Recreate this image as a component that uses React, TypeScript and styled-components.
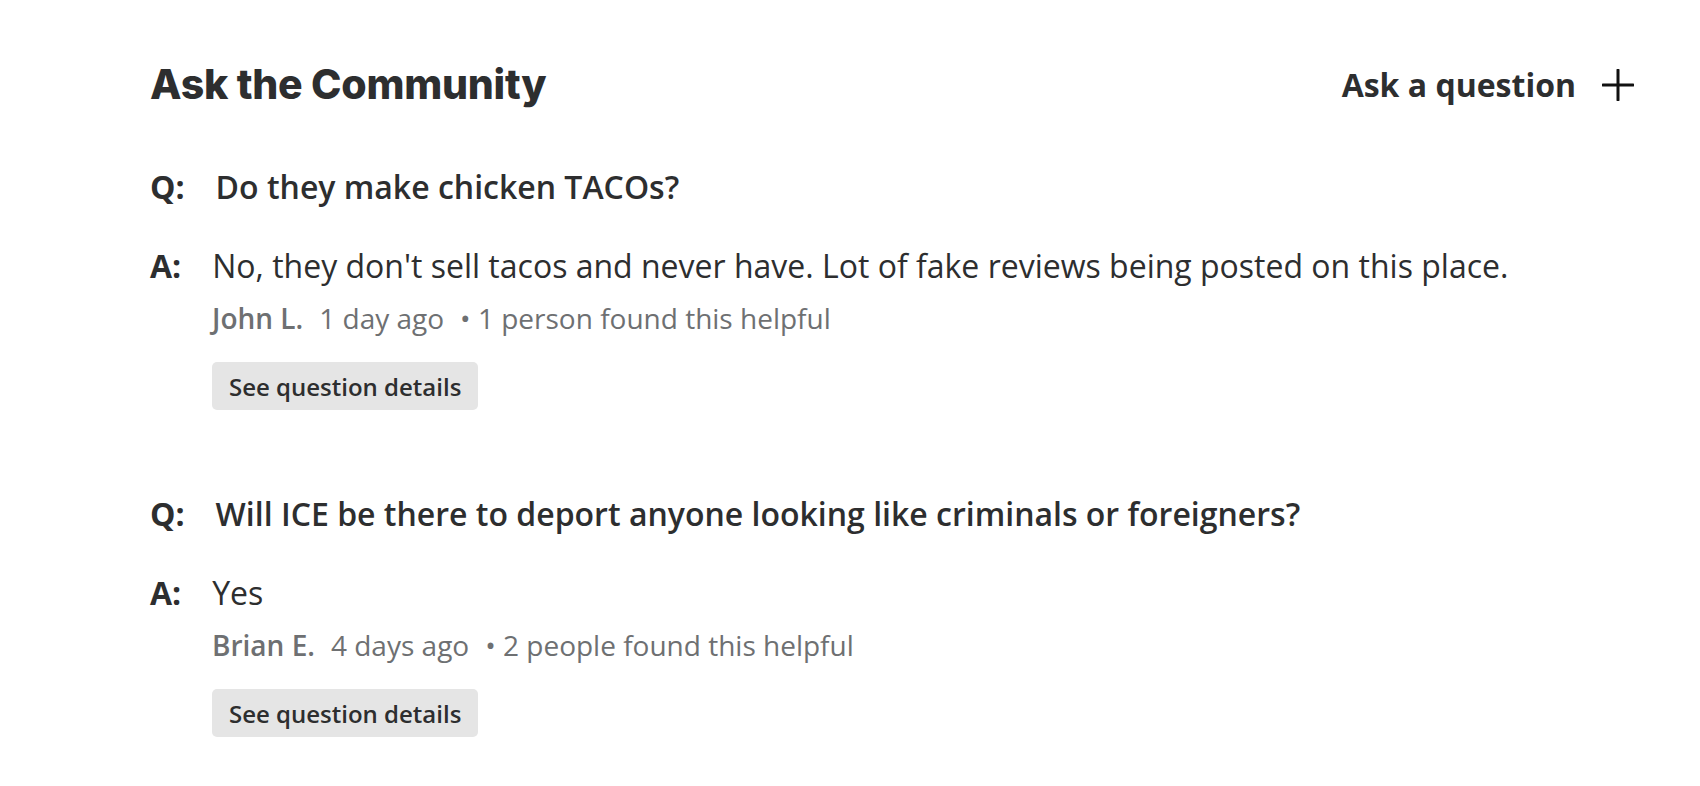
import React from "react";
import styled, { createGlobalStyle } from "styled-components";

const GlobalStyle = createGlobalStyle`
  body {
    margin: 0;
    background: #ffffff;
    font-family: "Open Sans", "Liberation Sans", sans-serif;
    color: #2d2e2f;
  }
`;

const Page = styled.div`
  padding: 60px 66px 0 150px;
`;

const Header = styled.div`
  display: flex;
  justify-content: space-between;
  align-items: center;
`;

const Title = styled.h2`
  margin: 0;
  font-family: "Inter", "Liberation Sans", sans-serif;
  font-weight: 800;
  font-size: 41px;
  line-height: 1.2;
  letter-spacing: -0.25px;
  color: #2d2e2f;
`;

const AskButton = styled.button`
  display: flex;
  align-items: center;
  gap: 26px;
  border: none;
  background: none;
  padding: 0;
  cursor: pointer;
  font-family: "Open Sans", "Liberation Sans", sans-serif;
  font-weight: 700;
  font-size: 32px;
  line-height: 40px;
  color: #2d2e2f;
`;

const List = styled.div`
  display: flex;
  flex-direction: column;
  gap: 84px;
  margin-top: 58px;
`;

const Item = styled.div`
  display: flex;
  flex-direction: column;
`;

const Row = styled.div<{ $semibold?: boolean }>`
  display: flex;
  font-size: 32px;
  line-height: 40px;
  font-weight: ${(p) => (p.$semibold ? 600 : 400)};
`;

const Label = styled.span`
  font-weight: 700;
  margin-right: 31px;
  flex-shrink: 0;
`;

const Details = styled.div`
  padding-left: 62px;
  display: flex;
  flex-direction: column;
  align-items: flex-start;
`;

const AnswerRow = styled(Row)`
  margin-top: 39px;
`;

const Meta = styled.div`
  display: flex;
  gap: 16px;
  margin-top: 16px;
  font-size: 28px;
  line-height: 32px;
  color: #6e7072;
`;

const Author = styled.span`
  font-weight: 650;
`;

const DetailsButton = styled.button`
  margin-top: 28px;
  border: none;
  border-radius: 5px;
  background: #e5e5e5;
  padding: 9px 17px 7px;
  font-family: "Open Sans", "Liberation Sans", sans-serif;
  font-weight: 600;
  font-size: 24px;
  line-height: 32px;
  color: #2d2e2f;
  cursor: pointer;
`;

const PlusIcon = () => (
  <svg width="32" height="32" viewBox="0 0 32 32" fill="none">
    <path d="M16 1V31M1 16H31" stroke="#111" strokeWidth="3" strokeLinecap="round" />
  </svg>
);

type QA = {
  question: string;
  answer: string;
  author: string;
  when: string;
  helpful: string;
};

const items: QA[] = [
  {
    question: "Do they make chicken TACOs?",
    answer: "No, they don't sell tacos and never have. Lot of fake reviews being posted on this place.",
    author: "John L.",
    when: "1 day ago",
    helpful: "1 person found this helpful",
  },
  {
    question: "Will ICE be there to deport anyone looking like criminals or foreigners?",
    answer: "Yes",
    author: "Brian E.",
    when: "4 days ago",
    helpful: "2 people found this helpful",
  },
];

const App: React.FC = () => {
  return (
    <Page>
      <GlobalStyle />
      <Header>
        <Title>Ask the Community</Title>
        <AskButton>
          Ask a question
          <PlusIcon />
        </AskButton>
      </Header>
      <List>
        {items.map((item) => (
          <Item key={item.question}>
            <Row $semibold>
              <Label>Q:</Label>
              <span>{item.question}</span>
            </Row>
            <AnswerRow>
              <Label>A:</Label>
              <span>{item.answer}</span>
            </AnswerRow>
            <Details>
              <Meta>
                <Author>{item.author}</Author>
                <span>{item.when}</span>
                <span>• {item.helpful}</span>
              </Meta>
              <DetailsButton>See question details</DetailsButton>
            </Details>
          </Item>
        ))}
      </List>
    </Page>
  );
};

export default App;
